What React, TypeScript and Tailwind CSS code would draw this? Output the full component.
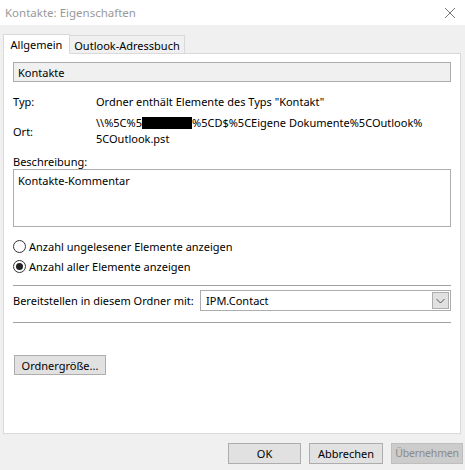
import React, { useState } from "react";

const font = { fontFamily: '"Noto Sans", "Open Sans", sans-serif' };

function Radio({ checked, label, onClick }: { checked: boolean; label: string; onClick: () => void }) {
  return (
    <div className="flex items-center h-[20px] cursor-default" onClick={onClick}>
      <span className="w-[13px] h-[13px] rounded-full border border-[#333] bg-white flex items-center justify-center mr-[3px]">
        {checked && <span className="w-[7px] h-[7px] rounded-full bg-[#222]" />}
      </span>
      <span>{label}</span>
    </div>
  );
}

export default function App() {
  const [mode, setMode] = useState(1);
  return (
    <div className="w-[465px] h-[470px] bg-[#f0f0f0] text-[11px] text-black overflow-hidden leading-none whitespace-nowrap" style={font}>
      {/* title bar */}
      <div className="h-[25px] bg-white flex items-center justify-between pl-[5px] pr-[9px]">
        <span className="text-[#999] text-[11.5px]">Kontakte: Eigenschaften</span>
        <svg width="12" height="12" viewBox="0 0 12 12" stroke="#777" strokeWidth="1">
          <path d="M1 1 L11 11 M11 1 L1 11" />
        </svg>
      </div>

      {/* tabs */}
      <div className="flex items-end pl-[3px] pt-[8px] h-[28px] relative z-10">
        <div className="h-[20px] w-[67px] bg-white border border-[#d9d9d9] border-b-white flex items-center justify-center pt-[1px] mb-[-1px]">
          Allgemein
        </div>
        <div className="h-[18px] w-[115px] bg-[#f0f0f0] border border-[#d9d9d9] border-l-0 border-b-0 flex items-center justify-center pt-[2px]">
          Outlook-Adressbuch
        </div>
      </div>

      {/* page */}
      <div className="mx-[3px] w-[458px] h-[381px] bg-white border border-[#d9d9d9] px-[9px] pt-[8px]">
        <div className="h-[20px] bg-[#f0f0f0] border border-[#adadad] flex items-center pl-[4px]">Kontakte</div>

        <div className="flex mt-[12px] h-[14px] items-center">
          <span className="w-[83px]">Typ:</span>
          <span>Ordner enthält Elemente des Typs "Kontakt"</span>
        </div>

        <div className="flex mt-[7px] items-center">
          <span className="w-[83px]">Ort:</span>
          <div className="leading-[16px]">
            <div className="flex items-center">
              <span>\\%5C%5</span>
              <span className="inline-block w-[50px] h-[12px] bg-black" />
              <span>%5CD$%5CEigene Dokumente%5COutlook%</span>
            </div>
            <div>5COutlook.pst</div>
          </div>
        </div>

        <div className="mt-[7px] h-[14px] flex items-center">Beschreibung:</div>
        <div className="mt-[1px] h-[58px] border border-[#adadad] px-[4px] pt-[5px]">Kontakte-Kommentar</div>

        <div className="mt-[9px] flex flex-col">
          <Radio checked={mode === 0} label="Anzahl ungelesener Elemente anzeigen" onClick={() => setMode(0)} />
          <Radio checked={mode === 1} label="Anzahl aller Elemente anzeigen" onClick={() => setMode(1)} />
        </div>

        <div className="mt-[9px] border-t border-[#a0a0a0]" />

        <div className="mt-[4px] flex items-center h-[21px]">
          <span className="w-[187px]">Bereitstellen in diesem Ordner mit:</span>
          <div className="flex-1 h-[21px] border border-[#adadad] flex items-center justify-between pl-[5px] pr-[1px]">
            <span>IPM.Contact</span>
            <span className="w-[17px] h-[17px] bg-[#e1e1e1] border border-[#adadad] flex items-center justify-center">
              <svg width="9" height="6" viewBox="0 0 9 6" fill="none" stroke="#555" strokeWidth="1">
                <path d="M0.5 1 L4.5 5 L8.5 1" />
              </svg>
            </span>
          </div>
        </div>

        <div className="mt-[11px] border-t border-[#a0a0a0]" />

        <button className="mt-[32px] ml-[1px] h-[20px] w-[92px] bg-[#e1e1e1] border border-[#adadad] flex items-center justify-center">
          Ordnergröße...
        </button>
      </div>

      {/* dialog buttons */}
      <div className="flex justify-end gap-[8px] mt-[9px] pr-[2px]">
        <button className="w-[73px] h-[21px] bg-[#e1e1e1] border border-[#adadad]">OK</button>
        <button className="w-[74px] h-[21px] bg-[#e1e1e1] border border-[#adadad]">Abbrechen</button>
        <button className="w-[72px] h-[21px] bg-[#cccccc] border border-[#bfbfbf] text-[#8a8a8a] text-[10.5px] tracking-[-0.2px]">Übernehmen</button>
      </div>
    </div>
  );
}
